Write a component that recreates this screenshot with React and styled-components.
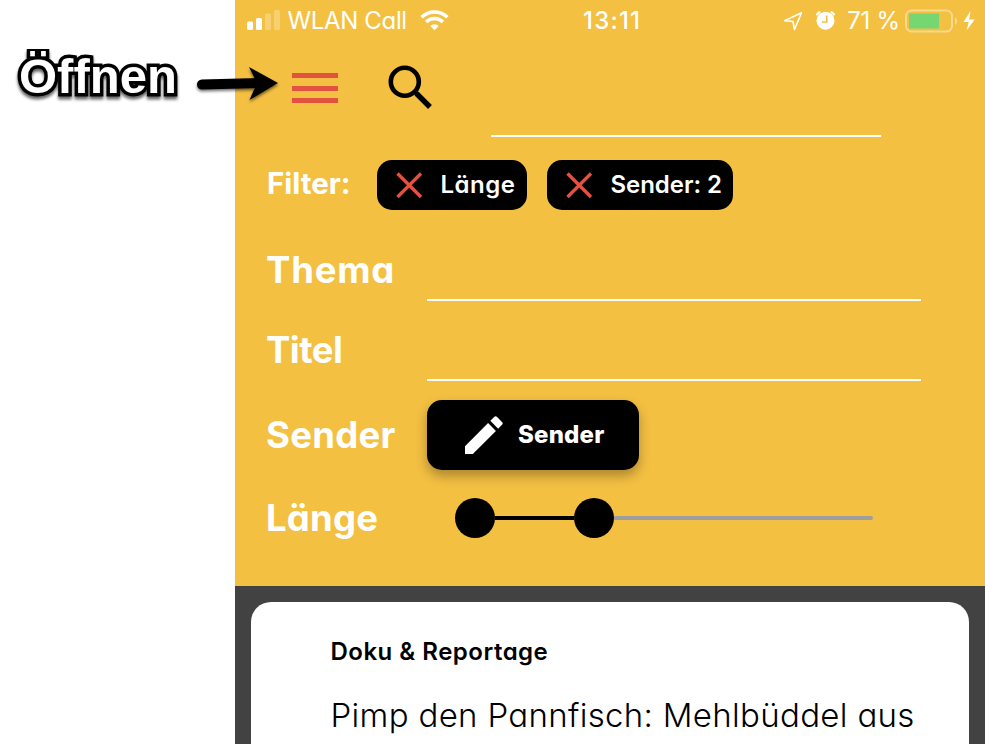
import React from "react";
import styled, { createGlobalStyle } from "styled-components";

const Global = createGlobalStyle`
  * { box-sizing: border-box; }
  body { margin: 0; background: #fff; overflow: hidden; }
`;

const yellow = "#f4c042";
const red = "#e35241";

const Page = styled.div`
  position: relative;
  display: flex;
  width: 985px;
  height: 744px;
  overflow: hidden;
  background: #fff;
  font-family: Inter, "Open Sans", sans-serif;
  font-feature-settings: "cv11";
`;

const Margin = styled.aside`
  width: 235px;
  flex: none;
  padding: 49px 0 0 14px;
`;

const Callout = styled.div`
  height: 70px;
  padding-left: 5px;
  overflow: hidden;
  font: 700 49px/54px "Liberation Sans", Arial, sans-serif;
  color: #fff;
  -webkit-text-stroke: 7px #000;
  paint-order: stroke fill;
  stroke-linejoin: round;
  filter: drop-shadow(0 3px 1.5px rgba(0, 0, 0, 0.6));
  white-space: nowrap;
`;

const Arrow = styled.svg`
  position: absolute;
  left: 190px;
  top: 60px;
  filter: drop-shadow(0 2px 1.5px rgba(0, 0, 0, 0.55));
`;

const Phone = styled.main`
  display: flex;
  flex-direction: column;
  width: 750px;
  background: #424242;
`;

const Header = styled.section`
  display: flex;
  flex-direction: column;
  height: 586px;
  flex: none;
  background: ${yellow};
`;

const Text = styled.span`
  font-size: ${(p) => p.$size}px;
  font-weight: ${(p) => p.$weight || 600};
  letter-spacing: ${(p) => p.$spacing || 0}px;
  line-height: ${(p) => p.$line || 40}px;
  color: ${(p) => p.$color || "#fff"};
  white-space: nowrap;
`;

const StatusBar = styled.div`
  display: grid;
  grid-template-columns: 336px 1fr auto;
  align-items: center;
  height: 41px;
  padding: 0 9px 0 12px;
`;

const StatusGroup = styled.div`
  display: flex;
  align-items: center;
`;

const Signal = styled.svg`
  margin-right: 7.5px;
`;

const Wifi = styled.svg`
  margin-left: auto;
  margin-right: 134px;
`;

const Battery = styled.svg`
  margin-left: 4px;
`;

const Toolbar = styled.div`
  display: flex;
  height: 119px;
  padding-left: 57px;
`;

const IconButton = styled.button`
  display: flex;
  align-items: flex-start;
  width: ${(p) => p.$width}px;
  padding: ${(p) => p.$top}px 0 0;
  border: 0;
  background: none;
`;

const Bars = styled.span`
  display: flex;
  flex-direction: column;
  gap: 7.5px;
  width: 46px;
`;

const Bar = styled.span`
  height: 5px;
  background: ${red};
`;

const Input = styled.input`
  width: ${(p) => p.$width}px;
  height: ${(p) => p.$height}px;
  padding: 0;
  border: 0;
  border-bottom: 2px solid #fff;
  border-radius: 0;
  outline: 0;
  background: transparent;
  color: #fff;
  font: 500 30px Inter, sans-serif;
`;

const Filters = styled.div`
  display: flex;
  height: 50px;
  padding-left: 32px;
`;

const FilterLabel = styled.div`
  width: 110px;
  padding-top: 3px;
`;

const Chip = styled.div`
  display: flex;
  align-items: center;
  width: ${(p) => p.$width}px;
  height: 50px;
  margin-right: 20px;
  padding-left: 18.5px;
  border-radius: 15px;
  background: #000;
`;

const Cross = styled.svg`
  flex: none;
  margin-right: 18px;
`;

const Field = styled.div`
  display: flex;
  height: ${(p) => p.$height}px;
  padding-left: 31px;
`;

const FieldLabel = styled.label`
  width: 161px;
  flex: none;
  padding-top: ${(p) => p.$top}px;
`;

const Button = styled.button`
  display: flex;
  align-items: center;
  width: 212px;
  height: 70px;
  margin-top: 19px;
  padding: 0 0 0 38px;
  border: 0;
  border-radius: 15px;
  background: #000;
  box-shadow: 0 6px 12px rgba(0, 0, 0, 0.3);
  font-family: inherit;
  font-feature-settings: inherit;
`;

const Pencil = styled.svg`
  margin-right: 15px;
`;

const Slider = styled.div`
  display: flex;
  align-items: center;
  height: 40px;
  margin: 17px 0 0 28px;
`;

const Thumb = styled.span`
  width: 40px;
  height: 40px;
  border-radius: 50%;
  background: #000;
`;

const Track = styled.span`
  width: ${(p) => p.$width}px;
  height: 4px;
  border-radius: 0 ${(p) => p.$end || 0}px ${(p) => p.$end || 0}px 0;
  background: ${(p) => p.$color};
`;

const Card = styled.article`
  display: flex;
  flex-direction: column;
  flex: 1;
  margin: 16px 16px 0;
  padding: 30px 0 0 79.5px;
  border-radius: 20px 20px 0 0;
  background: #fff;
`;

const CardTitle = styled.div`
  margin-top: 23px;
`;

const FilterChip = ({ label, width, size, spacing }) => (
  <Chip $width={width}>
    <Cross width="27" height="27" viewBox="0 0 27 27">
      <path d="M1.5 1.5 25 25M25 1.5 1.5 25" stroke={red} strokeWidth="3.3" />
    </Cross>
    <Text $size={size} $spacing={spacing}>{label}</Text>
  </Chip>
);

export default function App() {
  return (
    <Page>
      <Global />
      <Margin>
        <Callout>Öffnen</Callout>
      </Margin>
      <Phone>
        <Header>
          <StatusBar>
            <StatusGroup>
              <Signal width="33" height="21" viewBox="0 0 33 21" fill="#fff">
                <rect x="0" y="11.5" width="6" height="8.5" rx="1.5" />
                <rect x="9" y="8" width="6" height="12" rx="1.5" />
                <rect x="18" y="3.5" width="6" height="16.5" rx="1.5" opacity=".25" />
                <rect x="27" y="0" width="6" height="20" rx="1.5" opacity=".25" />
              </Signal>
              <Text $size={24} $weight={400} $spacing={-0.35}>WLAN Call</Text>
              <Wifi width="29" height="21" viewBox="0 0 29 21" fill="none" stroke="#fff">
                <path d="M1.6 7.3a18.4 18.4 0 0 1 25.8 0" strokeWidth="3.6" />
                <path d="M6.1 11.9a12 12 0 0 1 16.8 0" strokeWidth="3.5" />
                <path d="M10.3 16a6 6 0 0 1 8.4 0l-4.2 4.3z" fill="#fff" stroke="none" />
              </Wifi>
            </StatusGroup>
            <Text $size={24} $weight={500} $spacing={1.2}>13:11</Text>
            <StatusGroup>
              <svg width="20" height="20" viewBox="0 0 20 20" fill="none" stroke="#fff" strokeWidth="1.6" strokeLinejoin="round">
                <path d="M18.5 1.8 1.8 9.6l8.2.9 1.5 8z" />
              </svg>
              <svg width="44" height="20" viewBox="0 0 44 20">
                <circle cx="22.5" cy="9.7" r="9" fill="#fff" />
                <path d="M13.7 4.4q.6-2.800 3.600-3.400M31.300 4.400q-.6-2.800-3.600-3.400" stroke="#fff" strokeWidth="1.800" fill="none" />
                <path d="M23.800 4.500v6.500h-5" stroke={yellow} strokeWidth="1.600" fill="none" />
              </svg>
              <Text $size={24} $weight={400} $spacing={-0.2}>71 %</Text>
              <Battery width="72" height="24" viewBox="0 0 72 24">
                <rect x="2" y="1.5" width="46" height="21" rx="5.5" fill="none" stroke="#fff" strokeWidth="2" opacity=".4" />
                <rect x="5" y="4.5" width="30" height="15" fill="#76d672" />
                <path d="M51 8q4.500 4 0 8z" fill="#fff" opacity=".4" />
                <path d="M66.500 2 59.500 13h5.200l-2.200 8.500L70.700 10.500h-5.500z" fill="#fff" />
              </Battery>
            </StatusGroup>
          </StatusBar>
          <Toolbar>
            <IconButton $width={91} $top={32} aria-label="Menü">
              <Bars><Bar /><Bar /><Bar /></Bars>
            </IconButton>
            <IconButton $width={108} $top={18} aria-label="Suche">
              <svg width="60" height="60" viewBox="0 0 60 60" fill="none" stroke="#000">
                <circle cx="21.800" cy="22.800" r="14" strokeWidth="4.600" />
                <path d="m33.500 34.500 13.500 13.500" strokeWidth="5.400" />
                <path d="m30.500 31.500 4 4" strokeWidth="4" />
              </svg>
            </IconButton>
            <Input $width={390} $height={96} aria-label="Suche" />
          </Toolbar>
          <Filters>
            <FilterLabel><Text $size={29.5} $weight={700}>Filter:</Text></FilterLabel>
            <FilterChip label="Länge" width={150} size={24} spacing={0.5} />
            <FilterChip label="Sender: 2" width={186} size={24} spacing={-0.05} />
          </Filters>
          <Field $height={91}>
            <FieldLabel $top={40}><Text $size={36.5} $weight={700} $spacing={0.8}>Thema</Text></FieldLabel>
            <Input $width={494} $height={91} aria-label="Thema" />
          </Field>
          <Field $height={80}>
            <FieldLabel $top={29}><Text $size={36.5} $weight={700} $spacing={-0.5}>Titel</Text></FieldLabel>
            <Input $width={494} $height={80} aria-label="Titel" />
          </Field>
          <Field $height={100}>
            <FieldLabel $top={34}><Text $size={36.5} $weight={700} $spacing={0.3}>Sender</Text></FieldLabel>
            <Button>
              <Pencil width="38" height="38" viewBox="3 2.8 18.2 18.2" fill="#fff">
                <path d="M3 17.25V21h3.75L17.81 9.94l-3.75-3.75L3 17.25zM20.71 7.04a.996.996 0 0 0 0-1.41l-2.34-2.34a.996.996 0 0 0-1.41 0l-1.83 1.83 3.75 3.75 1.83-1.83z" />
              </Pencil>
              <Text $size={24} $weight={800} $spacing={0.2}>Sender</Text>
            </Button>
          </Field>
          <Field $height={80}>
            <FieldLabel $top={17}><Text $size={36.5} $weight={700} $spacing={0.2}>Länge</Text></FieldLabel>
            <Slider>
              <Thumb /><Track $width={79.4} $color="#000" /><Thumb /><Track $width={258.6} $end={2} $color="#9e9e9e" />
            </Slider>
          </Field>
        </Header>
        <Card>
          <Text $size={24} $spacing={0.5} $color="#000">Doku &amp; Reportage</Text>
          <CardTitle>
            <Text $size={33} $weight={300} $spacing={0.32} $color="#000">Pimp den Pannfisch: Mehlbüddel aus</Text>
          </CardTitle>
        </Card>
      </Phone>
      <Arrow width="92" height="46" viewBox="0 0 92 46">
        <path d="M12 24.5 70 23" stroke="#000" strokeWidth="10" strokeLinecap="round" />
        <path d="M88 23 59 7l8 16-7.500 17z" fill="#000" />
      </Arrow>
    </Page>
  );
}
